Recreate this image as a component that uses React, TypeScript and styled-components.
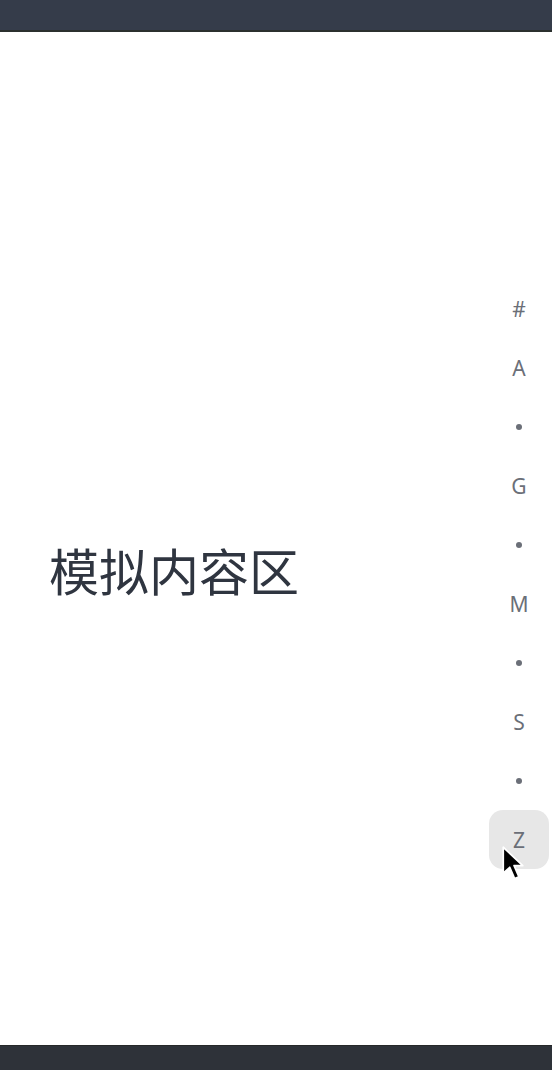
import React from 'react';
import styled, { createGlobalStyle } from 'styled-components';

const GlobalStyle = createGlobalStyle`
  html, body {
    margin: 0;
    padding: 0;
    background: #ffffff;
  }
  #root {
    height: 1070px;
  }
`;

const Screen = styled.div`
  display: flex;
  flex-direction: column;
  width: 552px;
  height: 1070px;
  overflow: hidden;
  font-family: "Noto Sans", "Noto Sans CJK SC", sans-serif;
`;

const TopBar = styled.div`
  flex-shrink: 0;
  height: 30px;
  background-color: #353c4a;
  border-bottom: 2px solid #2b302e;
`;

const BottomBar = styled.div`
  flex-shrink: 0;
  height: 24px;
  background-color: #2e3239;
  border-top: 1px solid #262829;
`;

const Body = styled.div`
  position: relative;
  flex: 1;
  display: flex;
  align-items: flex-start;
  justify-content: space-between;
  padding-top: 247px;
  background: #ffffff;
`;

const Content = styled.div`
  display: flex;
  align-items: center;
  height: 580px;
  padding: 0 0 10px 49px;
  font-size: 50px;
  color: #2f3540;
  font-family: "Noto Sans CJK SC", sans-serif;
`;

const IndexBar = styled.ul`
  display: flex;
  flex-direction: column;
  margin: 0 3px 0 0;
  padding: 0;
  list-style: none;
`;

const IndexItem = styled.li<{ $active?: boolean }>`
  display: flex;
  align-items: center;
  justify-content: center;
  width: 60px;
  height: 59px;
  border-radius: 14px;
  font-size: 21px;
  color: #6b6f78;
  background-color: ${({ $active }) => ($active ? '#e7e7e7' : 'transparent')};
`;

const Dot = styled.span`
  width: 6px;
  height: 6px;
  border-radius: 50%;
  background-color: #6b6f78;
`;

const Pointer = styled.svg`
  position: absolute;
  left: 500px;
  top: 813px;
  width: 26px;
  height: 37px;
`;

const entries = ['#', 'A', '•', 'G', '•', 'M', '•', 'S', '•', 'Z'];

export default function App() {
  return (
    <>
      <GlobalStyle />
      <Screen>
        <TopBar />
        <Body>
          <Content>模拟内容区</Content>
          <IndexBar>
            {entries.map((e, i) => (
              <IndexItem key={i} $active={e === 'Z'}>
                {e === '•' ? <Dot /> : e}
              </IndexItem>
            ))}
          </IndexBar>
          <Pointer viewBox="0 0 24 34">
            <path
              d="M3 2 L3 26 L9 20.5 L13.5 31 L17.5 29.3 L13 19 L21 19 Z"
              fill="#000"
              stroke="#fff"
              strokeWidth="1.6"
              strokeLinejoin="round"
            />
          </Pointer>
        </Body>
        <BottomBar />
      </Screen>
    </>
  );
}
